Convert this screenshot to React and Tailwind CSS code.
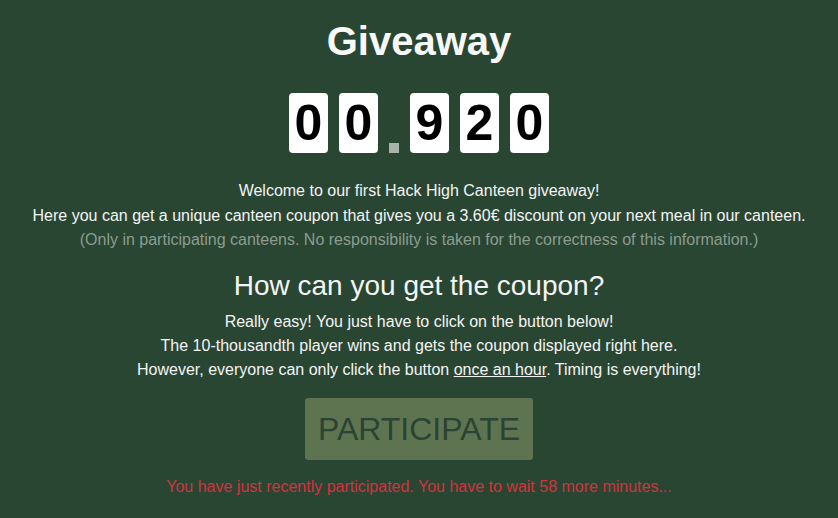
const digits = ['0', '0', '.', '9', '2', '0'];

function DigitBox({ value }) {
  if (value === '.') {
    return (
      <div className="flex h-[60px] w-[10px] items-end">
        <div className="h-[10px] w-[10px] bg-[#a7b3a9]" />
      </div>
    );
  }
  return (
    <div className="flex h-[60px] w-[39px] items-center justify-center rounded-[4px] bg-white text-[50px] font-bold leading-none text-black">
      {value}
    </div>
  );
}

export default function App() {
  return (
    <div
      className="flex min-h-[518px] w-full flex-col items-center bg-[#294633] pt-[18px] text-center text-[#f4f4f4]"
      style={{ fontFamily: '"Liberation Sans", Arial, sans-serif' }}
    >
      <h1 className="text-[40px] font-bold leading-[46px] text-[#f8f8f8]">Giveaway</h1>

      <div className="mt-[29px] flex gap-[11px]">
        {digits.map((d, i) => (
          <DigitBox key={i} value={d} />
        ))}
      </div>

      <div className="mt-[26px] text-[16px] leading-[24.5px]">
        <p>Welcome to our first Hack High Canteen giveaway!</p>
        <p>Here you can get a unique canteen coupon that gives you a 3.60€ discount on your next meal in our canteen.</p>
        <p className="text-[#8c9c8f]">
          (Only in participating canteens. No responsibility is taken for the correctness of this information.)
        </p>
      </div>

      <h2 className="mt-[17px] text-[28px] leading-[32px]">How can you get the coupon?</h2>

      <div className="mt-[8px] text-[16px] leading-[24px]">
        <p>Really easy! You just have to click on the button below!</p>
        <p>The 10-thousandth player wins and gets the coupon displayed right here.</p>
        <p>
          However, everyone can only click the button <span className="underline">once an hour</span>. Timing is everything!
        </p>
      </div>

      <button
        type="button"
        className="mt-[16px] flex h-[62px] w-[228px] items-center justify-center rounded-[3px] bg-[#5e7451] text-[32px] leading-none text-[#2a4333]"
      >
        PARTICIPATE
      </button>

      <p className="mt-[15px] text-[16px] leading-[24px] text-[#d3323f]">
        You have just recently participated. You have to wait 58 more minutes...
      </p>
    </div>
  );
}
